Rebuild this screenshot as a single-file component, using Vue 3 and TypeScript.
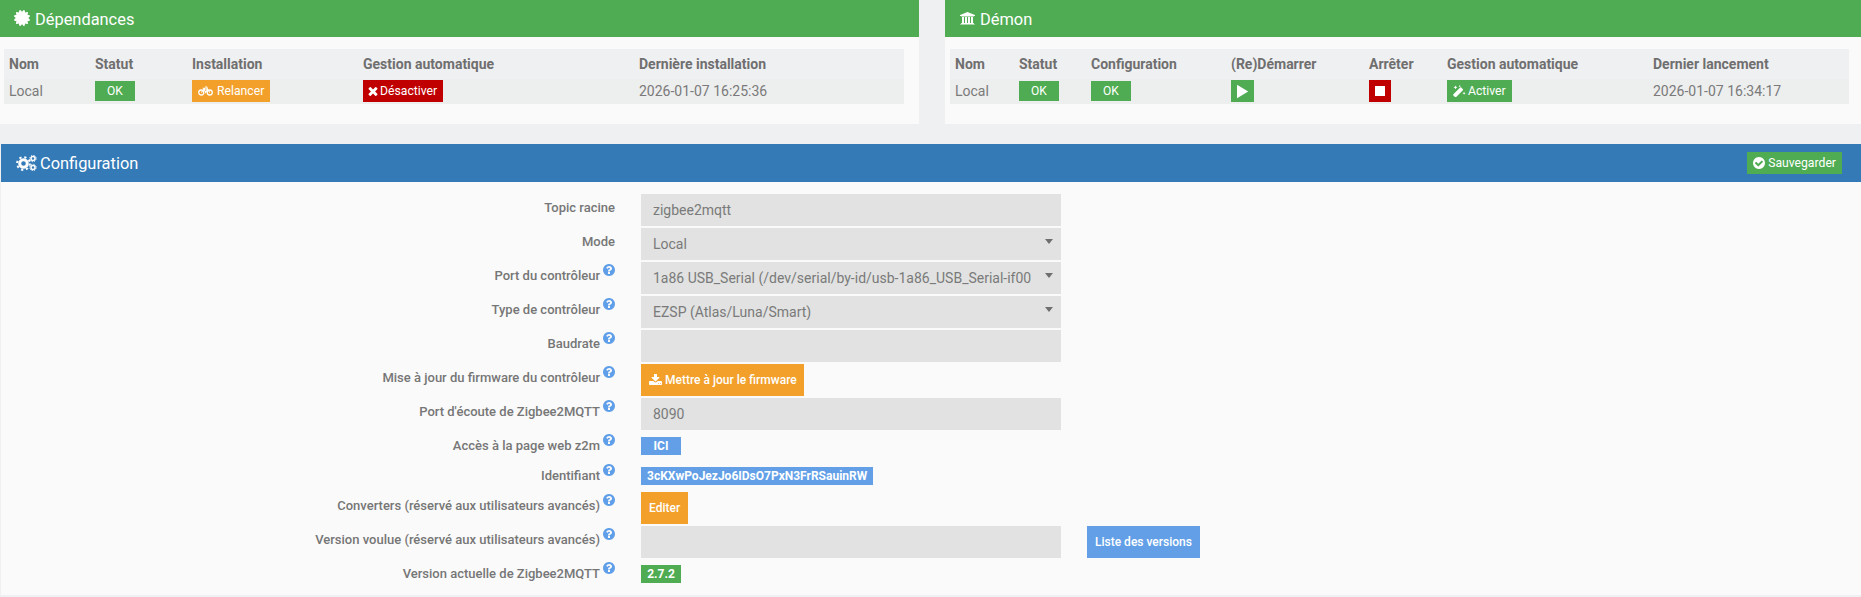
<script setup lang="ts">
interface FormRow {
  label: string;
  hint: boolean;
  kind: "input" | "select" | "action" | "tag";
  value?: string;
  tone?: string;
  download?: boolean;
  extra?: string;
}

const rows: FormRow[] = [
  { label: "Topic racine", hint: false, kind: "input", value: "zigbee2mqtt" },
  { label: "Mode", hint: false, kind: "select", value: "Local" },
  { label: "Port du contrôleur", hint: true, kind: "select", value: "1a86 USB_Serial (/dev/serial/by-id/usb-1a86_USB_Serial-if00" },
  { label: "Type de contrôleur", hint: true, kind: "select", value: "EZSP (Atlas/Luna/Smart)" },
  { label: "Baudrate", hint: true, kind: "input", value: "" },
  { label: "Mise à jour du firmware du contrôleur", hint: true, kind: "action", value: "Mettre à jour le firmware", download: true },
  { label: "Port d'écoute de Zigbee2MQTT", hint: true, kind: "input", value: "8090" },
  { label: "Accès à la page web z2m", hint: true, kind: "tag", value: "ICI", tone: "tag-blue tag-wide" },
  { label: "Identifiant", hint: true, kind: "tag", value: "3cKXwPoJezJo6IDsO7PxN3FrRSauinRW", tone: "tag-blue" },
  { label: "Converters (réservé aux utilisateurs avancés)", hint: true, kind: "action", value: "Editer" },
  { label: "Version voulue (réservé aux utilisateurs avancés)", hint: true, kind: "input", value: "", extra: "Liste des versions" },
  { label: "Version actuelle de Zigbee2MQTT", hint: true, kind: "tag", value: "2.7.2", tone: "tag-green tag-wide" },
];
</script>

<template>
  <div class="page">
    <svg class="defs" aria-hidden="true">
      <defs>
        <symbol id="i-question" viewBox="128 128 1536 1536">
          <path d="M1024 1376v-192q0-14-9-23t-23-9h-192q-14 0-23 9t-9 23v192q0 14 9 23t23 9h192q14 0 23-9t9-23zm256-672q0-88-55.500-163t-138.500-116-170-41q-243 0-371 213-15 24 8 42l132 100q7 6 19 6 16 0 25-12 53-68 86-92 34-24 86-24 48 0 85.500 26t37.500 59q0 38-20 61t-68 45q-63 28-115.500 86.500t-52.500 125.500v36q0 14 9 23t23 9h192q14 0 23-9t9-23q0-19 21.500-49.500t54.500-49.500q32-18 49-28.500t46-35 44.500-48 28-60.500 12.500-81zm384 192q0 209-103 385.500t-279.500 279.500-385.500 103-385.500-103-279.500-279.500-103-385.500 103-385.500 279.500-279.500 385.500-103 385.500 103 279.500 279.500 103 385.500z" />
        </symbol>
      </defs>
    </svg>

    <div class="top">
      <section class="panel dep">
        <h3 class="head green">
          <svg class="ico-head" viewBox="128 128 1536 1536"><path d="M1504 896l138 135q30 28 20 70-12 41-52 51l-188 48 53 186q12 41-19 70-29 31-70 19l-186-53-48 188q-10 40-51 52-12 2-19 2-31 0-51-22l-135-138-135 138q-28 30-70 20-41-11-51-52l-48-188-186 53q-41 12-70-19-31-29-19-70l53-186-188-48q-40-10-52-51-10-42 20-70l138-135-138-135q-30-28-20-70 12-41 52-51l188-48-53-186q-12-41 19-70 29-31 70-19l186 53 48-188q10-41 51-51 41-12 70 19l135 139 135-139q29-30 70-19 41 10 51 51l48 188 186-53q41-12 70 19 31 29 19 70l-53 186 188 48q40 10 52 51 10 42-20 70z" /></svg>
          <span>Dépendances</span>
        </h3>
        <div class="panel-body">
          <table class="state">
            <colgroup>
              <col style="width: 86px" /><col style="width: 97px" /><col style="width: 171px" /><col style="width: 276px" /><col />
            </colgroup>
            <thead>
              <tr><th>Nom</th><th>Statut</th><th>Installation</th><th>Gestion automatique</th><th>Dernière installation</th></tr>
            </thead>
            <tbody>
              <tr>
                <td>Local</td>
                <td><span class="ok">OK</span></td>
                <td>
                  <a class="btn orange">
                    <svg class="ico-bike" viewBox="0 0 30 20" fill="none" stroke="currentColor"><circle cx="6.500" cy="13" r="5" stroke-width="2.600" /><circle cx="23.500" cy="13" r="5" stroke-width="2.600" /><path d="M6.500 13 12 6h7l4.500 7M9.500 4.500h5M19 6l-1.500-4H14M12 6l3.500 7L19 6" stroke-width="2.200" /></svg>
                    <span>Relancer</span>
                  </a>
                </td>
                <td>
                  <a class="btn red">
                    <svg class="ico-x" viewBox="270 240 1250 1320"><path d="M1490 1322q0 40-28 68l-136 136q-28 28-68 28t-68-28l-294-294-294 294q-28 28-68 28t-68-28l-136-136q-28-28-28-68t28-68l294-294-294-294q-28-28-28-68t28-68l136-136q28-28 68-28t68 28l294 294 294-294q28-28 68-28t68 28l136 136q28 28 28 68t-28 68l-294 294 294 294q28 28 28 68z" /></svg>
                    <span>Désactiver</span>
                  </a>
                </td>
                <td>2026-01-07 16:25:36</td>
              </tr>
            </tbody>
          </table>
        </div>
      </section>

      <section class="panel dem">
        <h3 class="head green">
          <svg class="ico-bank" viewBox="0 0 1920 1728"><path d="M960 0l960 384v128h-128q0 26-20.500 45t-48.500 19h-1526q-28 0-48.500-19t-20.500-45h-128v-128zm-704 640h256v768h128v-768h256v768h128v-768h256v768h128v-768h256v768h59q28 0 48.500 19t20.500 45v64h-1664v-64q0-26 20.500-45t48.500-19h59v-768zm1595 960q28 0 48.500 19t20.500 45v128h-1920v-128q0-26 20.500-45t48.500-19h1782z" /></svg>
          <span>Démon</span>
        </h3>
        <div class="panel-body">
          <table class="state">
            <colgroup>
              <col style="width: 64px" /><col style="width: 72px" /><col style="width: 140px" /><col style="width: 138px" /><col style="width: 78px" /><col style="width: 206px" /><col />
            </colgroup>
            <thead>
              <tr><th>Nom</th><th>Statut</th><th>Configuration</th><th>(Re)Démarrer</th><th>Arrêter</th><th>Gestion automatique</th><th>Dernier lancement</th></tr>
            </thead>
            <tbody>
              <tr>
                <td>Local</td>
                <td><span class="ok">OK</span></td>
                <td><span class="ok">OK</span></td>
                <td>
                  <a class="btn green icon-only play">
                    <svg class="ico-ctl" viewBox="190 120 1410 1552" preserveAspectRatio="none"><path d="M1576 927l-1328 738q-23 13-39.500 3t-16.500-36v-1472q0-26 16.500-36t39.500 3l1328 738q23 13 23 31t-23 31z" /></svg>
                  </a>
                </td>
                <td>
                  <a class="btn red icon-only stop">
                    <svg class="ico-stop" viewBox="128 128 1536 1536"><path d="M1664 192v1408q0 26-19 45t-45 19h-1408q-26 0-45-19t-19-45v-1408q0-26 19-45t45-19h1408q26 0 45 19t19 45z" /></svg>
                  </a>
                </td>
                <td>
                  <a class="btn green">
                    <svg class="ico-magic" viewBox="0 0 18 16"><path d="M1.800 12 10.500 3.300a1 1 0 0 1 1.400 0l2.100 2.100a1 1 0 0 1 0 1.400L5.300 15.500a1 1 0 0 1-1.400 0l-2.100-2.100a1 1 0 0 1 0-1.400z" /><path d="M4.500 .5l.8 1.700 1.700.8-1.700.8-.8 1.700-.8-1.700L2 3l1.700-.8zM15.500 8.500l.6 1.400 1.400.6-1.400.6-.6 1.400-.6-1.400-1.400-.6 1.400-.6zM10 0l.5 1 1 .5-1 .5-.5 1-.5-1-1-.5 1-.5z" /></svg>
                    <span>Activer</span>
                  </a>
                </td>
                <td>2026-01-07 16:34:17</td>
              </tr>
            </tbody>
          </table>
        </div>
      </section>
    </div>

    <section class="panel config">
      <h3 class="head blue">
        <svg class="ico-cogs" viewBox="0 0 21 16">
          <circle cx="7.500" cy="8.500" r="3.800" fill="none" stroke="currentColor" stroke-width="3" />
          <circle cx="7.500" cy="8.500" r="6.400" fill="none" stroke="currentColor" stroke-width="2" stroke-dasharray="2.200 2.827" />
          <circle cx="17" cy="3.500" r="2" fill="none" stroke="currentColor" stroke-width="1.500" />
          <circle cx="17" cy="3.500" r="3.200" fill="none" stroke="currentColor" stroke-width="1" stroke-dasharray="1.300 1.213" />
          <circle cx="17" cy="12.500" r="2" fill="none" stroke="currentColor" stroke-width="1.500" />
          <circle cx="17" cy="12.500" r="3.200" fill="none" stroke="currentColor" stroke-width="1" stroke-dasharray="1.300 1.213" />
        </svg>
        <span>Configuration</span>
        <a class="btn green save">
          <svg class="ico-check" viewBox="128 128 1536 1536"><path d="M1412 734q0-28-18-46l-91-90q-19-19-45-19t-45 19l-408 407-226-226q-19-19-45-19t-45 19l-91 90q-18 18-18 46 0 27 18 45l362 362q19 19 45 19 27 0 46-19l543-543q18-18 18-45zm252 162q0 209-103 385.500t-279.500 279.500-385.500 103-385.500-103-279.500-279.500-103-385.500 103-385.500 279.500-279.500 385.500-103 385.500 103 279.500 279.500 103 385.500z" /></svg>
          <span>Sauvegarder</span>
        </a>
      </h3>

      <form class="form" @submit.prevent>
        <div v-for="row in rows" :key="row.label" class="row">
          <label class="label">
            <span>{{ row.label }}</span>
            <svg v-if="row.hint" class="hint"><use href="#i-question" /></svg>
          </label>

          <input v-if="row.kind === 'input'" class="field" type="text" :value="row.value" />

          <div v-else-if="row.kind === 'select'" class="select-wrap">
            <select class="field select">
              <option>{{ row.value }}</option>
            </select>
          </div>

          <div v-else-if="row.kind === 'action'" class="ctl">
            <a class="action orange" :class="{ 'has-icon': row.download }">
              <svg v-if="row.download" class="ico-dl" viewBox="64 128 1664 1536"><path d="M1344 1344q0-26-19-45t-45-19-45 19-19 45 19 45 45 19 45-19 19-45zm256 0q0-26-19-45t-45-19-45 19-19 45 19 45 45 19 45-19 19-45zm128-224v320q0 40-28 68t-68 28h-1472q-40 0-68-28t-28-68v-320q0-40 28-68t68-28h465l135 136q58 56 136 56t136-56l136-136h464q40 0 68 28t28 68zm-325-569q17 41-14 70l-448 448q-18 19-45 19t-45-19l-448-448q-31-29-14-70 17-39 59-39h256v-448q0-26 19-45t45-19h256q26 0 45 19t19 45v448h256q42 0 59 39z" /></svg>
              <span>{{ row.value }}</span>
            </a>
          </div>

          <div v-else class="ctl">
            <span class="tag" :class="row.tone">{{ row.value }}</span>
          </div>

          <a v-if="row.extra" class="action sky">{{ row.extra }}</a>
        </div>
      </form>
    </section>
  </div>
</template>

<style>
html,
body {
  margin: 0;
  background: #eff0f2;
}
</style>

<style scoped>
.page {
  width: 1861px;
  height: 597px;
  overflow: hidden;
  background: #eff0f2;
  font-family: Roboto, "Liberation Sans", sans-serif;
  font-size: 14px;
  color: #7a7a7a;
}
.defs {
  position: absolute;
  width: 0;
  height: 0;
}
.top {
  display: flex;
  gap: 26px;
  margin-bottom: 20px;
}
.panel {
  background: #fafafa;
}
.dep {
  width: 919px;
  height: 124px;
}
.dem {
  flex: 1;
  height: 124px;
}
.config {
  margin-left: 1px;
}
.head {
  display: flex;
  align-items: center;
  margin: 0;
  height: 37px;
  box-sizing: border-box;
  padding: 1px 15px 0;
  font-size: 16.400px;
  font-weight: 400;
  color: #fff;
}
.head.green {
  background: #4fac53;
}
.head.blue {
  height: 38px;
  padding: 0 19px 0 15px;
  background: #337ab7;
}
.ico-head {
  width: 16px;
  height: 16px;
  margin: -2px 5px 0 -1px;
  fill: currentColor;
}
.ico-bank {
  width: 15px;
  height: 13.500px;
  margin: -1px 5px 0 0;
  fill: currentColor;
}
.ico-cogs {
  width: 21px;
  height: 16px;
  margin-right: 3px;
}
.panel-body {
  padding: 12px 15px 0 4px;
}
.dem .panel-body {
  padding: 12px 12px 0 5px;
}
.state {
  width: 100%;
  table-layout: fixed;
  border-collapse: collapse;
}
.state th {
  height: 30px;
  padding: 0 0 0 5px;
  background: #eff0f2;
  color: #6f6f6f;
  font-size: 14px;
  font-weight: 700;
  text-align: left;
}
.state td {
  height: 22px;
  padding: 1px 0 2px 5px;
  background: #edeeee;
  line-height: 22px;
  vertical-align: top;
  white-space: nowrap;
}
.ok {
  display: block;
  width: 40px;
  height: 20px;
  margin-top: 1px;
  background: #4fac53;
  color: #fff;
  font-size: 12px;
  font-weight: 400;
  line-height: 20px;
  text-align: center;
}
.btn {
  display: inline-flex;
  align-items: center;
  height: 22px;
  padding: 0 6px;
  color: #fff;
  font-size: 12.200px;
  line-height: 22px;
  vertical-align: top;
  white-space: nowrap;
}
.green {
  background: #4fac53;
}
.orange {
  background: #f2a02a;
}
.red {
  background: #c00000;
}
.sky {
  background: #629fe7;
}
.icon-only {
  justify-content: center;
  padding: 0;
}
.play {
  width: 23px;
}
.stop {
  width: 22px;
}
.ico-ctl {
  width: 11px;
  height: 13px;
  fill: #fff;
}
.ico-stop {
  width: 10px;
  height: 10px;
  fill: #fff;
}
.ico-x {
  width: 10px;
  height: 10px;
  margin: 0 2px 0 -1px;
  fill: currentColor;
}
.ico-bike {
  width: 15px;
  height: 10px;
  margin-right: 4px;
}
.ico-magic {
  width: 14px;
  height: 12.500px;
  margin: 0 2px 0 -1px;
  fill: currentColor;
}
.ico-check {
  width: 12px;
  height: 12px;
  margin-right: 3px;
  fill: currentColor;
}
.save {
  margin-left: auto;
}
.form {
  padding: 12px 0 5px;
}
.row {
  display: grid;
  grid-template-columns: 614px 420px auto;
  column-gap: 26px;
  justify-content: start;
  margin-bottom: 2px;
}
.label {
  display: flex;
  justify-content: flex-end;
  align-items: flex-start;
  min-height: 28px;
  padding-top: 6px;
  box-sizing: border-box;
  color: #767676;
  font-size: 13px;
  font-weight: 500;
  line-height: 16px;
  white-space: nowrap;
}
.hint {
  width: 12px;
  height: 12px;
  margin: -4px 0 0 3px;
  fill: #5f9ee8;
}
.field {
  display: block;
  width: 100%;
  height: 32px;
  box-sizing: border-box;
  border: 0;
  border-radius: 0;
  outline: 0;
  margin: 0;
  padding: 0 12px;
  background: #e1e2e1;
  color: #7a7a7a;
  font-family: inherit;
  font-size: 14px;
}
.select {
  appearance: none;
  padding-right: 24px;
  text-overflow: clip;
  white-space: nowrap;
  overflow: hidden;
}
.select-wrap {
  position: relative;
}
.select-wrap::after {
  content: "";
  position: absolute;
  top: 11px;
  right: 8px;
  border-style: solid;
  border-width: 5px 4.500px 0;
  border-color: #6f6f6f transparent transparent;
  pointer-events: none;
}
.action {
  display: inline-flex;
  align-items: center;
  height: 32px;
  padding: 0 8px;
  box-sizing: border-box;
  color: #fff;
  font-size: 12px;
  font-weight: 500;
  white-space: nowrap;
}
.has-icon {
  padding-right: 7px;
}
.ico-dl {
  width: 13px;
  height: 12px;
  margin-right: 3px;
  fill: currentColor;
}
.tag {
  display: inline-block;
  height: 18px;
  margin-top: 5px;
  padding: 0 6px;
  color: #fff;
  font-size: 12px;
  font-weight: 700;
  line-height: 18px;
  vertical-align: top;
}
.tag-wide {
  width: 40px;
  padding: 0;
  text-align: center;
}
.tag-blue {
  background: #629fe7;
}
.tag-green {
  background: #4fac53;
}
</style>
